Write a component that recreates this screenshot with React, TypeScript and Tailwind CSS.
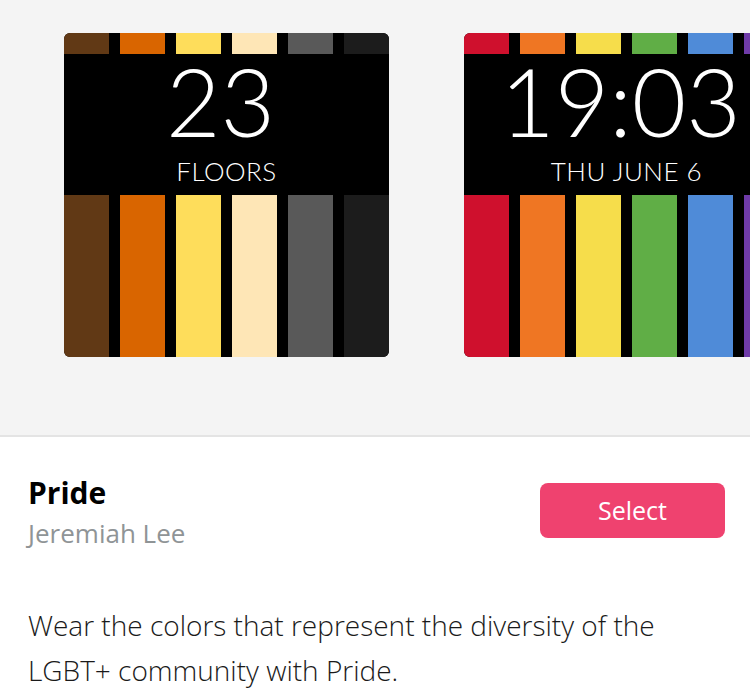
const prideBrown = ['#613915', '#d96500', '#fedd5b', '#fee6b6', '#595959', '#1c1c1c'];
const prideRainbow = ['#cf102d', '#ef7623', '#f6dd4b', '#60ae46', '#4f8bd8', '#6f3ba8'];

function WatchFace({ colors, big, small }: { colors: string[]; big: string; small: string }) {
  return (
    <div className="flex h-[324px] w-[325px] shrink-0 flex-col overflow-hidden rounded-[6px] bg-black font-['Lato',sans-serif]">
      {/* Top strips */}
      <div className="flex h-[21px] gap-[11px]">
        {colors.map((c) => (
          <div key={c} className="flex-1" style={{ backgroundColor: c }} />
        ))}
      </div>

      {/* Readout */}
      <div className="flex h-[141px] flex-col items-center text-white">
        <div className="mr-[12px] text-[94px] font-light leading-none">{big}</div>
        <div className="mt-[10px] text-[26px] font-light leading-none tracking-[0.5px]">{small}</div>
      </div>

      {/* Bars */}
      <div className="flex flex-1 gap-[11px]">
        {colors.map((c) => (
          <div key={c} className="flex-1" style={{ backgroundColor: c }} />
        ))}
      </div>
    </div>
  );
}

export default function App() {
  return (
    <div className="h-[697px] w-[750px] overflow-hidden bg-white font-['Open_Sans',sans-serif]">
      {/* Preview carousel */}
      <div className="flex h-[437px] gap-[75px] overflow-hidden border-b-2 border-[#e4e4e4] bg-[#f4f4f4] pl-[64px] pt-[33px]">
        <WatchFace colors={prideBrown} big="23" small="FLOORS" />
        <WatchFace colors={prideRainbow} big="19:03" small="THU JUNE 6" />
      </div>

      {/* Details */}
      <div className="pl-[28px] pr-[25px] pt-[41px]">
        <div className="flex items-start justify-between">
          <div>
            <h1 className="text-[30px] font-bold leading-none text-black">Pride</h1>
            <p className="mt-[12px] text-[26px] leading-none text-[#8f9496]">Jeremiah Lee</p>
          </div>
          <button className="mt-[5px] flex h-[55px] w-[185px] items-center justify-center rounded-[8px] bg-[#ef426f] text-[25px] leading-none text-white">
            Select
          </button>
        </div>

        <p className="mt-[57px] text-[28px] font-light leading-[45px] text-[#1a1a1a]">
          Wear the colors that represent the diversity of the LGBT+ community with Pride.
        </p>
      </div>
    </div>
  );
}
